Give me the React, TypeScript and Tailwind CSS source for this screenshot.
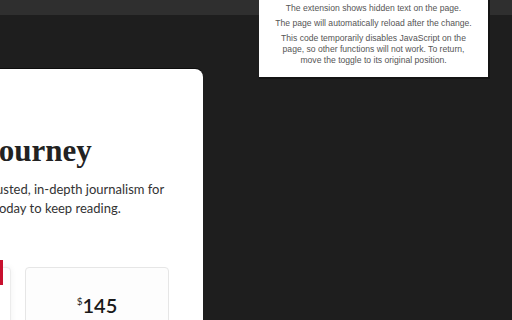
import React from 'react'

const serif = { fontFamily: '"Liberation Serif", "DejaVu Serif", serif' }

export default function App() {
  return (
    <div className="relative h-[320px] w-[512px] overflow-hidden bg-[#1e1e1e] font-['Lato',sans-serif]">
      {/* browser strip */}
      <div className="h-[15px] bg-[#2f2f2f]" />

      {/* paywall card */}
      <div className="ml-[-260px] mt-[54px] h-[300px] w-[463px] rounded-lg bg-white pl-[44px] pt-[62px] shadow-[0_-1px_0_0_#0d0d0d]">
        <div className="w-[600px]">
          <h1
            className="whitespace-nowrap text-[31px] font-bold leading-[39px] text-[#222]"
            style={serif}
          >
            Continue your Journey
          </h1>
          <p className="mt-[10px] whitespace-nowrap text-[13px] leading-[19px] text-[#333]">
            Get unlimited digital access to your trusted, in-depth journalism for
            <br />
            for your whole household. Subscribe today to keep reading.
          </p>

          {/* plans */}
          <div className="ml-[83px] mt-[49px] flex gap-[14px]">
            <div className="relative h-[80px] w-[144px] rounded border border-[#ececec] bg-white shadow-[0_0_6px_rgba(0,0,0,0.06)]">
              <div className="absolute right-[7px] top-[-8px] flex h-[25px] items-center bg-[#c8102e] px-2 text-[10px] font-bold uppercase tracking-wide text-white">
                Best value
              </div>
            </div>
            <div className="flex h-[80px] w-[144px] justify-center rounded border border-[#e6e6e6] bg-[#fdfdfd] pt-[25px]">
              <div className="flex items-start text-[#1a1a1a]">
                <span className="mt-[3px] text-[10px] leading-none">$</span>
                <span className="text-[20px] font-semibold leading-[24px]">145</span>
              </div>
            </div>
          </div>
        </div>
      </div>

      {/* extension popup */}
      <div className="absolute left-[259px] top-0 h-[79px] w-[231px] border-b-2 border-r-2 border-[#141414] bg-white px-1 pt-[3px] text-center font-['Liberation_Sans',Arial,sans-serif] text-[8.6px] leading-[11px] text-[#555]">
        <p>The extension shows hidden text on the page.</p>
        <p className="mt-[4px]">The page will automatically reload after the change.</p>
        <p className="mt-[4px] px-3">
          This code temporarily disables JavaScript on the page, so other functions will not
          work. To return, move the toggle to its original position.
        </p>
      </div>
    </div>
  )
}
